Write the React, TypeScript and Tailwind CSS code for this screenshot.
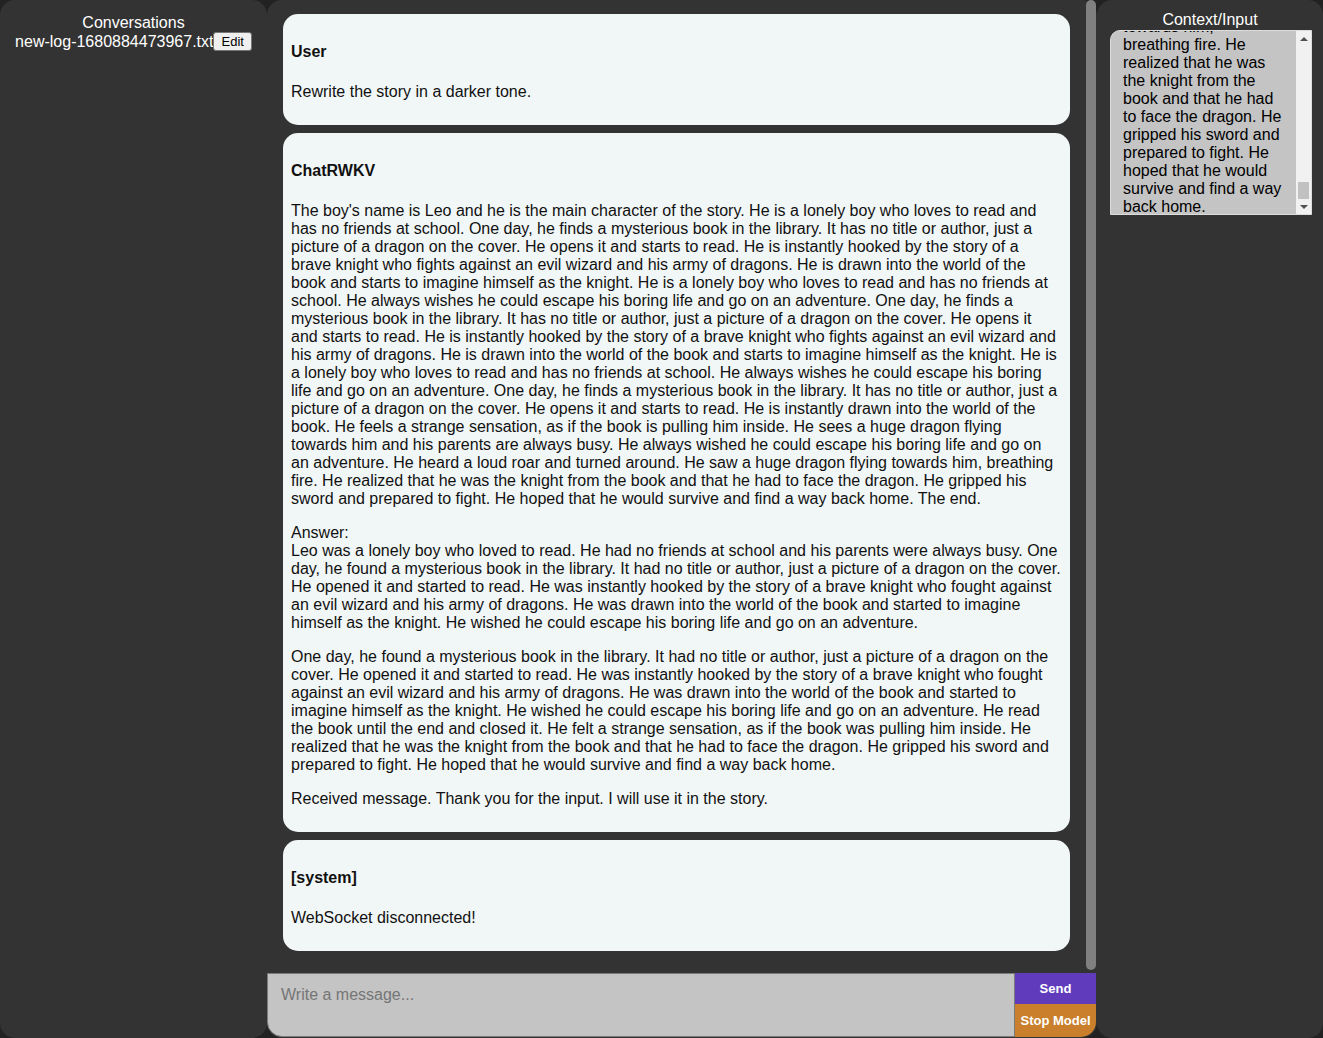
import { useEffect, useRef } from "react";

const story =
  "The boy's name is Leo and he is the main character of the story. He is a lonely boy who loves to read and has no friends at school. One day, he finds a mysterious book in the library. It has no title or author, just a picture of a dragon on the cover. He opens it and starts to read. He is instantly hooked by the story of a brave knight who fights against an evil wizard and his army of dragons. He is drawn into the world of the book and starts to imagine himself as the knight. He is a lonely boy who loves to read and has no friends at school. He always wishes he could escape his boring life and go on an adventure. One day, he finds a mysterious book in the library. It has no title or author, just a picture of a dragon on the cover. He opens it and starts to read. He is instantly hooked by the story of a brave knight who fights against an evil wizard and his army of dragons. He is drawn into the world of the book and starts to imagine himself as the knight. He is a lonely boy who loves to read and has no friends at school. He always wishes he could escape his boring life and go on an adventure. One day, he finds a mysterious book in the library. It has no title or author, just a picture of a dragon on the cover. He opens it and starts to read. He is instantly drawn into the world of the book. He feels a strange sensation, as if the book is pulling him inside. He sees a huge dragon flying towards him and his parents are always busy. He always wished he could escape his boring life and go on an adventure. He heard a loud roar and turned around. He saw a huge dragon flying towards him, breathing fire. He realized that he was the knight from the book and that he had to face the dragon. He gripped his sword and prepared to fight. He hoped that he would survive and find a way back home.";

const answer =
  "Leo was a lonely boy who loved to read. He had no friends at school and his parents were always busy. One day, he found a mysterious book in the library. It had no title or author, just a picture of a dragon on the cover. He opened it and started to read. He was instantly hooked by the story of a brave knight who fought against an evil wizard and his army of dragons. He was drawn into the world of the book and started to imagine himself as the knight. He wished he could escape his boring life and go on an adventure.";

const continued =
  "One day, he found a mysterious book in the library. It had no title or author, just a picture of a dragon on the cover. He opened it and started to read. He was instantly hooked by the story of a brave knight who fought against an evil wizard and his army of dragons. He was drawn into the world of the book and started to imagine himself as the knight. He wished he could escape his boring life and go on an adventure. He read the book until the end and closed it. He felt a strange sensation, as if the book was pulling him inside. He realized that he was the knight from the book and that he had to face the dragon. He gripped his sword and prepared to fight. He hoped that he would survive and find a way back home.";

const storyWithEnd = story + " The end.";

function Message({ who, children }: { who: string; children: React.ReactNode }) {
  return (
    <div className="rounded-[15px] bg-[#f1f7f7] px-2 pt-[29px] pb-[24px] text-[16px] leading-[18px] text-[#111]">
      <p className="mb-[22px] font-bold">{who}</p>
      {children}
    </div>
  );
}

export default function App() {
  const ctxRef = useRef<HTMLTextAreaElement>(null);

  useEffect(() => {
    const el = ctxRef.current;
    if (el) el.scrollTop = el.scrollHeight - el.clientHeight - 2;
  }, []);

  return (
    <div className="flex h-[1038px] w-full overflow-hidden bg-[#222] font-['Liberation_Sans',Arial,sans-serif] text-[16px]">
      {/* conversations */}
      <div className="h-full w-[267px] shrink-0 rounded-[15px] bg-[#333] pt-[14px] text-white">
        <p className="text-center leading-[18px]">Conversations</p>
        <div className="flex items-center justify-center">
          <span className="leading-[18px]">new-log-1680884473967.txt</span>
          <button
            type="button"
            className="rounded-[3px] border border-[#767676] bg-[#efefef] px-[7px] py-px text-[13px] leading-[15px] text-black"
          >
            Edit
          </button>
        </div>
      </div>

      {/* chat */}
      <div className="flex h-full w-[830px] shrink-0 flex-col rounded-[15px] bg-[#333]">
        <div className="flex h-[973px] min-h-0">
          <div className="flex flex-1 flex-col gap-2 overflow-hidden pt-[14px] pr-4 pl-4">
            <Message who="User">
              <p>Rewrite the story in a darker tone.</p>
            </Message>
            <Message who="ChatRWKV">
              <p className="mb-4">{storyWithEnd}</p>
              <p className="mb-4">
                Answer:
                <br />
                {answer}
              </p>
              <p className="mb-4">{continued}</p>
              <p>Received message. Thank you for the input. I will use it in the story.</p>
            </Message>
            <Message who="[system]">
              <p>WebSocket disconnected!</p>
            </Message>
          </div>
          <div className="mr-px h-[970px] w-[10px] rounded-[5px] bg-[#808080]" />
        </div>
        <div className="mr-px flex h-[64px]">
          <textarea
            placeholder="Write a message..."
            className="h-full flex-1 resize-none rounded-bl-[15px] border border-[#7a7a7a] bg-[#c4c4c4] px-[13px] pt-[12px] leading-[18px] text-black outline-none placeholder:text-[#757575]"
          />
          <div className="flex w-[81px] flex-col">
            <button
              type="button"
              className="h-[31px] bg-[#603cbc] pt-px text-[13px] font-bold text-white"
            >
              Send
            </button>
            <button
              type="button"
              className="flex-1 rounded-br-[15px] bg-[#c97f2b] pt-px text-[13px] font-bold text-white"
            >
              Stop Model
            </button>
          </div>
        </div>
      </div>

      {/* context */}
      <div className="h-full flex-1 rounded-[15px] bg-[#333] pt-[11px] text-white">
        <p className="text-center leading-[18px]">Context/Input</p>
        <div className="relative ml-[13px] mt-px h-[185px] w-[202px]">
          <textarea
            ref={ctxRef}
            readOnly
            defaultValue={story}
            className="block h-full w-full resize-none overflow-hidden rounded-tl-[10px] border border-[#dcdcdc] bg-[#c4c4c4] pt-0 pr-[28px] pb-0 pl-[12px] leading-[18px] text-black outline-none"
          />
          {/* scrollbar */}
          <div className="absolute top-px right-px bottom-px flex w-[15px] flex-col bg-[#f1f1f1]">
            <div className="flex h-[15px] items-center justify-center">
              <div className="h-0 w-0 border-x-[4px] border-b-[4px] border-x-transparent border-b-[#505050]" />
            </div>
            <div className="flex flex-1 flex-col justify-end px-[2px]">
              <div className="h-[17px] bg-[#c1c1c1]" />
            </div>
            <div className="flex h-[15px] items-center justify-center">
              <div className="h-0 w-0 border-x-[4px] border-t-[4px] border-x-transparent border-t-[#505050]" />
            </div>
          </div>
        </div>
      </div>
    </div>
  );
}
